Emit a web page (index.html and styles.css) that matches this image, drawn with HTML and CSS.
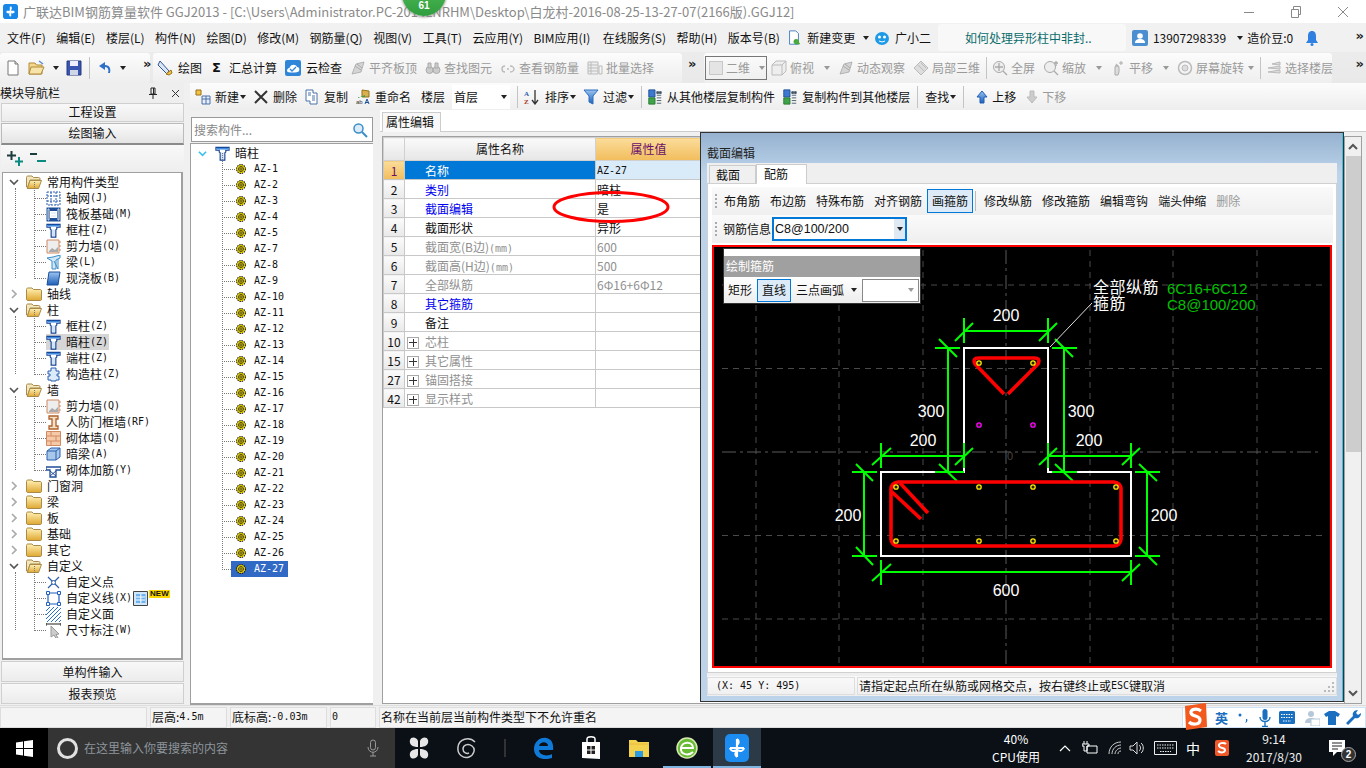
FILE: index.html
```html
<!DOCTYPE html>
<html lang="zh-CN">
<head>
<meta charset="utf-8">
<title>广联达BIM钢筋算量软件 GGJ2013</title>
<link rel="stylesheet" href="styles.css">
</head>
<body>
<svg class="defs" width="0" height="0" aria-hidden="true">
  <defs>
    <linearGradient id="gBlue" x1="0" y1="0" x2="0" y2="1"><stop offset="0" stop-color="#9cc4f0"/><stop offset="1" stop-color="#1d5fb8"/></linearGradient>
    <linearGradient id="gFold" x1="0" y1="0" x2="0" y2="1"><stop offset="0" stop-color="#fff2b8"/><stop offset="1" stop-color="#e0a830"/></linearGradient>
    <symbol id="col" viewBox="0 0 16 16"><path d="M1 1.500h14v3H11.500v2l-1 .8V15h-5V7.300l-1-.8v-2H1z" fill="#fff" stroke="#123f8f" stroke-width="1.200"/><path d="M1.500 2h13v1.800h-13z" fill="#3f8be0"/><path d="M6.500 7h3v7h-3z" fill="#cfe2f8"/></symbol>
    <symbol id="gear" viewBox="0 0 10 10"><circle cx="5" cy="5" r="4.400" fill="#ffe800" stroke="#111" stroke-width="1.100" stroke-dasharray="1.400 .9"/><circle cx="5" cy="5" r="2.500" fill="#ffe800" stroke="#222" stroke-width=".8"/><path d="M5 2.500v5M2.500 5h5" stroke="#222" stroke-width=".7"/></symbol>
    <symbol id="fold" viewBox="0 0 16 14"><path d="M.5 2.500c0-1 .5-1.500 1.500-1.500h4l1.500 1.500h6.500c1 0 1.500.5 1.500 1.500v8c0 1-.5 1.500-1.500 1.500H2c-1 0-1.500-.5-1.500-1.500z" fill="url(#gFold)" stroke="#a98a4a"/></symbol>
    <symbol id="foldo" viewBox="0 0 16 14"><path d="M.5 2.500c0-1 .5-1.500 1.500-1.500h4l1.500 1.500h5c1 0 1.500.5 1.500 1.500v1H4L1.500 13H2L.5 12z" fill="#f3e7c0" stroke="#a98a4a"/><path d="M4 5.500h11.500L12.500 13.500H1.300z" fill="url(#gFold)" stroke="#a98a4a"/></symbol>
    <symbol id="chevd" viewBox="0 0 10 10"><path d="M1 3l4 4 4-4" fill="none" stroke="#555" stroke-width="1.700"/></symbol>
    <symbol id="chevr" viewBox="0 0 10 10"><path d="M3 1l4 4-4 4" fill="none" stroke="#aaa" stroke-width="1.700"/></symbol>
    <symbol id="page" viewBox="0 0 16 16"><path d="M3 1h7l3 3v11H3z" fill="#fff" stroke="#777"/><path d="M10 1v3h3" fill="#ddd" stroke="#777"/></symbol>
    <symbol id="gray" viewBox="0 0 16 16"><path d="M2 14l4-10 8-2-3 10z" fill="#d5d5d5" stroke="#b3b3b3"/><path d="M5 6l6 4M7 4l5 4" stroke="#aaa" fill="none"/></symbol>
    <symbol id="copy" viewBox="0 0 16 16"><path d="M2 1h7v3h4v11H6v-3H2z" fill="#fff" stroke="#4a70a8"/><path d="M4 4h3M4 6h3M8 7h3M8 9h3M8 11h3" stroke="#4a70a8"/></symbol>
    <symbol id="up" viewBox="0 0 12 14"><path d="M6 1l5 6H8v6H4V7H1z" fill="url(#gBlue)" stroke="#1d5fb8"/></symbol>
    <symbol id="down" viewBox="0 0 12 14"><path d="M6 13L1 7h3V1h4v6h3z" fill="#ccc" stroke="#bbb"/></symbol>
    <symbol id="cpy2" viewBox="0 0 16 18"><path d="M1 1h7v8H1z" fill="#3d79d0" stroke="#1f4f96"/><path d="M1 10h7v7H1z" fill="#3fa34a" stroke="#26762f"/><path d="M10 3h2v2h-2zM13 3h2v2h-2zM10 7h5M10 10h5M10 13h5M10 16h5" stroke="#456" fill="#456"/></symbol>
  </defs>
</svg>

<header class="titlebar">
  <svg class="ic appic" viewBox="0 0 16 16"><rect width="16" height="16" rx="3" fill="#1887e8"/><path d="M8 3v10M4 8h8M8 3a2 2 0 0 1 0 3M4 8a2 2 0 0 0 3 1M12 8a2 2 0 0 1-3 1M8 13a2 2 0 0 1 0-3" stroke="#fff" stroke-width="1.500" fill="none"/></svg>
  <span class="titletext">广联达BIM钢筋算量软件 GGJ2013 - [C:\Users\Administrator.PC-2014LNRHM\Desktop\白龙村-2016-08-25-13-27-07(2166版).GGJ12]</span>
  <div class="winbtns">
    <svg width="12" height="12" viewBox="0 0 12 12"><path d="M1 6.500h10" stroke="#888"/></svg>
    <svg width="12" height="12" viewBox="0 0 12 12"><path d="M1.500 3.500h7v8h-7zM3.500 3V.5h7v8H9" fill="none" stroke="#888"/></svg>
    <svg width="12" height="12" viewBox="0 0 12 12"><path d="M1 1l10 10M11 1L1 11" stroke="#888"/></svg>
  </div>
</header>
<div class="bubble">61</div>

<nav class="menubar">
  <span>文件(F)</span><span>编辑(E)</span><span>楼层(L)</span><span>构件(N)</span><span>绘图(D)</span><span>修改(M)</span><span>钢筋量(Q)</span><span>视图(V)</span><span>工具(T)</span><span>云应用(Y)</span><span class="bimi">BIM应用(I)</span><span>在线服务(S)</span><span>帮助(H)</span><span>版本号(B)</span>
  <span class="mi newchg">
    <svg class="ic" viewBox="0 0 16 18"><path d="M3 1h7l3 3v12H3z" fill="#fff" stroke="#3a7ac0"/><path d="M9 16l3-5 3 5z" fill="#4aa83f"/><circle cx="10.500" cy="13" r="3" fill="#4aa83f"/></svg>
    新建变更<i class="dd menu-dd"></i>
  </span>
  <span class="mi gxe">
    <svg class="ic" viewBox="0 0 16 16"><ellipse cx="8" cy="8.500" rx="7" ry="6.500" fill="#1e9be8"/><circle cx="5.500" cy="7" r="1.500" fill="#fff"/><circle cx="10.500" cy="7" r="1.500" fill="#fff"/><path d="M5 11q3 2 6 0" stroke="#fff" fill="none"/></svg>
    广小二
  </span>
  <span class="newsbox">如何处理异形柱中非封..</span>
  <span class="mi user">
    <svg class="ic" viewBox="0 0 16 16"><rect width="16" height="16" rx="2" fill="#4b8fd0"/><circle cx="8" cy="6" r="2.800" fill="#fff"/><path d="M3 13c0-3 2-4 5-4s5 1 5 4z" fill="#fff"/></svg>
    13907298339<i class="dd user-dd"></i>
  </span>
  <span class="bean">造价豆:0</span>
  <svg class="ic bell" viewBox="0 0 16 16"><path d="M8 1c3 0 4 2.500 4 5v4l2 3H2l2-3V6c0-2.500 1-5 4-5z" fill="#2f80e0"/><circle cx="8" cy="14.500" r="1.500" fill="#2f80e0"/></svg>
  <span class="more">»</span>
</nav>

<div class="toolbar1">
  <div class="seg seg-a">
    <svg class="ic" viewBox="0 0 16 16"><use href="#page"/></svg>
    <svg class="ic wide" viewBox="0 0 18 16"><path d="M1 3h6l1.500 2H14v9H1z" fill="#f4d98c" stroke="#b08a3a"/><path d="M3 7h13l-3 7H1z" fill="#f7e4a8" stroke="#b08a3a"/><path d="M11 1l4 3" stroke="#5c8fd8" stroke-width="1.500"/></svg>
    <i class="dd"></i>
    <svg class="ic" viewBox="0 0 16 16"><path d="M1 1h14v14H1z" fill="#3a55b0" stroke="#263a80"/><path d="M4 1h8v5H4z" fill="#eef"/><path d="M4 10h8v5H4z" fill="#cfd6e8"/></svg>
    <span class="vsep"></span>
    <svg class="ic" viewBox="0 0 16 16"><path d="M13 13c1-4 0-8-5-8V2L2 6l6 4V7c3 0 4 3 3 6z" fill="#2f70c8"/></svg>
    <i class="dd"></i>
    <span class="more">»</span>
  </div>
  <div class="seg seg-b">
    <span class="tb">
      <svg class="ic" viewBox="0 0 16 16"><path d="M3 1l9 10-2 3L1 5z" fill="#d8e6f6" stroke="#34558c"/><path d="M9 14l5-4 1 3-3 2z" fill="#f3c343" stroke="#987018"/></svg>绘图</span>
    <span class="tb sigma"><b>Σ</b>汇总计算</span>
    <span class="tb"><svg class="ic" viewBox="0 0 16 16"><rect width="16" height="16" rx="2" fill="#2f86d8"/><path d="M2 11c0-3 3-3 3-4 1-3 6-3 7 0 2 0 3 2 2 4-1 2-12 2-12 0z" fill="#fff"/><path d="M5 9l2 2 4-4" stroke="#2f86d8" stroke-width="1.300" fill="none"/></svg>云检查</span>
    <span class="tb off"><svg class="ic" viewBox="0 0 16 16"><use href="#gray"/></svg>平齐板顶</span>
    <span class="tb off"><svg class="ic" viewBox="0 0 16 16"><circle cx="4.500" cy="10" r="3.500" fill="#ccc" stroke="#aaa"/><circle cx="11.500" cy="10" r="3.500" fill="#ccc" stroke="#aaa"/><path d="M3 3h3v5H3zM10 3h3v5h-3z" fill="#ccc" stroke="#aaa"/></svg>查找图元</span>
    <span class="tb off"><svg class="ic" viewBox="0 0 16 16"><path d="M2 9c0-2 1-3 3-3M5 12c-2 0-3-1-3-3M10 6c3 0 4 2 4 3s-1 3-4 3" stroke="#bbb" fill="none" stroke-width="1.400"/><circle cx="8" cy="9" r="1" fill="#bbb"/></svg>查看钢筋量</span>
    <span class="tb off"><svg class="ic" viewBox="0 0 16 16"><path d="M1 2h10v12H1z" fill="#eee" stroke="#bbb"/><path d="M1 5h10M1 8h10M1 11h10M4 2v12M12 6h3v8h-3z" stroke="#bbb" fill="none"/></svg>批量选择</span>
  </div>
  <span class="more gapr">»</span>
  <div class="seg seg-c">
    <span class="combo2d"><span class="sq"></span>二维<i class="dd offdd"></i></span>
    <span class="tb off"><svg class="ic" viewBox="0 0 16 16"><path d="M1 5l4-4h10v10l-4 4H1z" fill="#eee" stroke="#bbb"/><path d="M1 5h10v10M11 5l4-4" stroke="#bbb" fill="none"/></svg>俯视<i class="dd offdd"></i></span>
    <span class="tb off"><svg class="ic" viewBox="0 0 16 16"><use href="#gray"/></svg>动态观察</span>
    <span class="tb off"><svg class="ic" viewBox="0 0 16 16"><path d="M8 1l7 7-7 7-7-7z" fill="#ddd" stroke="#bbb"/><path d="M5 5l6 6M8 3l5 5" stroke="#bbb"/></svg>局部三维</span>
    <span class="vsep"></span>
    <span class="tb off"><svg class="ic" viewBox="0 0 16 16"><circle cx="7" cy="7" r="5.500" fill="#eee" stroke="#aaa"/><path d="M7 3v8M3 7h8M11 11l4 4" stroke="#aaa" stroke-width="1.300"/></svg>全屏</span>
    <span class="tb off"><svg class="ic" viewBox="0 0 16 16"><circle cx="7" cy="7" r="5.500" fill="#eee" stroke="#aaa"/><path d="M11 11l4 4M13 1v5M11 3h4" stroke="#aaa" stroke-width="1.300"/></svg>缩放<i class="dd offdd"></i></span>
    <span class="tb off"><svg class="ic" viewBox="0 0 16 16"><path d="M5 15V7c0-1 1-1 1 0V5c0-1 1-1 1 0v1c0-1 1-1 1 0v1c0-1 1-1 1 0v5l-1 3z" fill="#ddd" stroke="#aaa"/><path d="M11 1v4M9 3h4" stroke="#aaa"/></svg>平移<i class="dd offdd"></i></span>
    <span class="tb off tight"><svg class="ic" viewBox="0 0 16 16"><circle cx="8" cy="8" r="6.500" fill="none" stroke="#bbb" stroke-width="1.500"/><circle cx="8" cy="8" r="3" fill="#ddd" stroke="#bbb"/></svg>屏幕旋转<i class="dd offdd"></i></span>
    <span class="vsep"></span>
    <span class="tb off"><svg class="ic" viewBox="0 0 16 16"><path d="M6 4l8-2v3zM2 8l12-2v3zM2 12l12-2v3z" fill="#ddd" stroke="#bbb"/></svg>选择楼层</span>
  </div>
  <span class="more endmore">»</span>
</div>

<main class="workspace">
  <aside class="leftnav">
    <div class="navhead"><span class="navtitle">模块导航栏</span>
      <svg class="pin" width="10" height="12" viewBox="0 0 10 12"><path d="M3 1h4v6H3zM1 7.500h8M5 8v4M5.500 1v6" fill="none" stroke="#222"/></svg>
      <svg class="navx" width="9" height="9" viewBox="0 0 9 9"><path d="M1 1l7 7M8 1L1 8" stroke="#333"/></svg>
    </div>
    <button class="navbtn top">工程设置</button>
    <button class="navbtn act">绘图输入</button>
    <div class="navtools">
      <svg width="16" height="15" viewBox="0 0 16 15"><path d="M4.500 0v9M0 4.500h9" stroke="#1c3d3d" stroke-width="2"/><path d="M12 6v9M8 10.500h8" stroke="#0a8a80" stroke-width="2"/></svg>
      <svg width="16" height="15" viewBox="0 0 16 15"><path d="M0 3h7" stroke="#1c3d3d" stroke-width="2"/><path d="M7 10h9" stroke="#0a8a80" stroke-width="2"/></svg>
    </div>
    <div class="navtree">
      <div class="grp open">
        <div class="r0"><svg class="cv"><use href="#chevd"/></svg><svg class="fd"><use href="#foldo"/></svg>常用构件类型</div>
        <div class="r1"><svg class="ci" viewBox="0 0 15 15"><path d="M1 1h13v13H1zM1 5h13M1 10h13M5 1v13M10 1v13" fill="none" stroke="#2a5fb0" stroke-dasharray="2 1"/></svg>轴网<span class="m">(J)</span></div>
        <div class="r1"><svg class="ci" viewBox="0 0 15 15"><path d="M.5.5h14v14H.5z" fill="#1f4f96"/><path d="M4 4h7v7H4z" fill="#fff"/><path d="M2 2h1v11H2zM12 2h1v11h-1zM5 6h5M5 9h5" stroke="#cfe2f8"/></svg>筏板基础<span class="m">(M)</span></div>
        <div class="r1"><svg class="ci" viewBox="0 0 16 16"><use href="#col"/></svg>框柱<span class="m">(Z)</span></div>
        <div class="r1"><svg class="ci" viewBox="0 0 15 15"><path d="M1 1h12v13H1z" fill="#eee" stroke="#d08a60"/><path d="M3 12l3-3 3 2 3-3v5H3z" fill="#aaa"/><path d="M13 3h2M13 7h2M13 11h2" stroke="#d08a60"/></svg>剪力墙<span class="m">(Q)</span></div>
        <div class="r1"><svg class="ci" viewBox="0 0 15 15"><path d="M1 3l6-1 7-2v3l-4 2v9H6V6z" fill="#cfe7f6" stroke="#3a8ec8"/><path d="M8 6l4 8V4" stroke="#3a8ec8" fill="none"/></svg>梁<span class="m">(L)</span></div>
        <div class="r1"><svg class="ci" viewBox="0 0 15 15"><path d="M3 1h11l-2 13H1z" fill="url(#gBlue)" stroke="#1a4f9c"/></svg>现浇板<span class="m">(B)</span></div>
      </div>
      <div class="r0"><svg class="cv"><use href="#chevr"/></svg><svg class="fd"><use href="#fold"/></svg>轴线</div>
      <div class="grp open">
        <div class="r0"><svg class="cv"><use href="#chevd"/></svg><svg class="fd"><use href="#foldo"/></svg>柱</div>
        <div class="r1"><svg class="ci" viewBox="0 0 16 16"><use href="#col"/></svg>框柱<span class="m">(Z)</span></div>
        <div class="r1"><span class="selnode"><svg class="ci" viewBox="0 0 16 16"><use href="#col"/></svg>暗柱<span class="m">(Z)</span></span></div>
        <div class="r1"><svg class="ci" viewBox="0 0 16 16"><use href="#col"/></svg>端柱<span class="m">(Z)</span></div>
        <div class="r1"><svg class="ci" viewBox="0 0 15 15"><path d="M5 1h5v3h3v3h-2v2h2v4h-3v1H5v-1H2V9h2V7H2V4h3z" fill="#dcebfa" stroke="#2a5fb0"/></svg>构造柱<span class="m">(Z)</span></div>
      </div>
      <div class="grp open">
        <div class="r0"><svg class="cv"><use href="#chevd"/></svg><svg class="fd"><use href="#foldo"/></svg>墙</div>
        <div class="r1"><svg class="ci" viewBox="0 0 15 15"><path d="M1 1h12v13H1z" fill="#eee" stroke="#d08a60"/><path d="M3 12l3-3 3 2 3-3v5H3z" fill="#aaa"/><path d="M13 3h2M13 7h2M13 11h2" stroke="#d08a60"/></svg>剪力墙<span class="m">(Q)</span></div>
        <div class="r1"><svg class="ci" viewBox="0 0 15 15"><path d="M3 1h9v3h-2v7h2v3H3v-3h3V4H3z" fill="#f3e0c8" stroke="#b0602a" stroke-width="1.300"/></svg>人防门框墙<span class="m">(RF)</span></div>
        <div class="r1"><svg class="ci" viewBox="0 0 15 15"><path d="M.5.5h14v14H.5z" fill="#f5c9a8" stroke="#d08a60"/><path d="M.5 5h14M.5 10h14M5 .5V5M10 5v5M5 10v5" stroke="#d08a60"/></svg>砌体墙<span class="m">(Q)</span></div>
        <div class="r1"><svg class="ci" viewBox="0 0 15 15"><path d="M1 4l4-3h9v9l-4 3H1z" fill="#a8c8ea" stroke="#2a5fb0"/><path d="M1 4h9v9M10 4l4-3" stroke="#2a5fb0" fill="none"/></svg>暗梁<span class="m">(A)</span></div>
        <div class="r1"><svg class="ci" viewBox="0 0 15 15"><path d="M0 4h15v3H10v7H4V7H0z" fill="#fff" stroke="#1f4f96" stroke-width="1.300"/><path d="M4 8l6 5M10 8l-6 5" stroke="#1f4f96"/></svg>砌体加筋<span class="m">(Y)</span></div>
      </div>
      <div class="r0"><svg class="cv"><use href="#chevr"/></svg><svg class="fd"><use href="#fold"/></svg>门窗洞</div>
      <div class="r0"><svg class="cv"><use href="#chevr"/></svg><svg class="fd"><use href="#fold"/></svg>梁</div>
      <div class="r0"><svg class="cv"><use href="#chevr"/></svg><svg class="fd"><use href="#fold"/></svg>板</div>
      <div class="r0"><svg class="cv"><use href="#chevr"/></svg><svg class="fd"><use href="#fold"/></svg>基础</div>
      <div class="r0"><svg class="cv"><use href="#chevr"/></svg><svg class="fd"><use href="#fold"/></svg>其它</div>
      <div class="grp open">
        <div class="r0"><svg class="cv"><use href="#chevd"/></svg><svg class="fd"><use href="#foldo"/></svg>自定义</div>
        <div class="r1"><svg class="ci" viewBox="0 0 15 15"><path d="M2 2l11 11M13 2L2 13" stroke="#2a5fb0" stroke-width="1.200"/><circle cx="7.500" cy="7.500" r="2" fill="#fff" stroke="#2a5fb0"/></svg>自定义点</div>
        <div class="r1"><svg class="ci" viewBox="0 0 15 15"><path d="M2 2h11v11H2z" fill="none" stroke="#1f5fc0" stroke-width="1.200"/><path d="M.5.5h3v3h-3zM11.500.5h3v3h-3zM.5 11.500h3v3h-3zM11.500 11.500h3v3h-3z" fill="#fff" stroke="#1f5fc0"/></svg>自定义线<span class="m">(X)</span>
          <svg class="grid-ic" viewBox="0 0 15 15"><path d="M.5.5h14v14H.5z" fill="#cfe6fb" stroke="#444"/><path d="M3 3h4v9H3zM8.500 3h4v9h-4z" fill="#6fb2ee"/><path d="M3 6h9M3 9h9" stroke="#fff"/></svg><span class="newtag">NEW</span></div>
        <div class="r1"><svg class="ci" viewBox="0 0 15 15"><path d="M0 4L4 0M0 8L8 0M0 12L12 0M1 15L15 1M5 15L15 5M9 15l6-6M13 15l2-2" stroke="#2a6fd0"/></svg>自定义面</div>
        <div class="r1"><svg class="ci" viewBox="0 0 15 15"><path d="M0 1h15M0 0v3M15 0v3" stroke="#222"/><path d="M5 3l8 8-3 .5 2 3.500-2 .5-2-3.500-3 2z" fill="#ccc" stroke="#999"/></svg>尺寸标注<span class="m">(W)</span></div>
      </div>
    </div>
    <button class="navbtn">单构件输入</button>
    <button class="navbtn">报表预览</button>
  </aside>

  <div class="rightarea">
    <div class="toolbar2">
      <span class="tb"><svg class="ic" viewBox="0 0 16 16"><path d="M1 1h5v5H1z" fill="#f3c343" stroke="#987018"/><path d="M7 7h8v8H7z" fill="#e8eefb" stroke="#4a70a8"/><path d="M7 10h8M11 7v8" stroke="#4a70a8"/></svg>新建<i class="dd"></i></span>
      <span class="tb"><svg class="ic" viewBox="0 0 16 16"><path d="M2 2l12 12M14 2L2 14" stroke="#333" stroke-width="2"/></svg>删除</span>
      <span class="tb"><svg class="ic" viewBox="0 0 16 16"><use href="#copy"/></svg>复制</span>
      <span class="tb"><svg class="ic" viewBox="0 0 16 16"><path d="M7 1l7 1v6H7z" fill="#d8b050" stroke="#987018"/><path d="M3 9l7-3v2H3z" fill="#3aa04a"/><text class="rn" x="1" y="15">ab</text><path d="M10 15l2-5 2 5M10.500 13.500h3" stroke="#1f4f96" fill="none"/></svg>重命名</span>
      <span class="floor">楼层</span>
      <span class="floorcombo">首层<i class="dd"></i></span>
      <span class="vsep"></span>
      <span class="tb"><svg class="ic sorti" viewBox="0 0 16 16"><text class="az1" x="0" y="7">A</text><text class="az2" x="0" y="15">Z</text><path d="M11 1v13M8 11l3 4 3-4" stroke="#333" fill="none" stroke-width="1.300"/></svg>排序<i class="dd"></i></span>
      <span class="tb"><svg class="ic" viewBox="0 0 16 16"><path d="M1 1h14l-5 6v8l-4-2V7z" fill="url(#gBlue)" stroke="#2a6fc0"/></svg>过滤<i class="dd"></i></span>
      <span class="vsep"></span>
      <span class="tb"><svg class="ic" viewBox="0 0 16 18"><use href="#cpy2"/></svg>从其他楼层复制构件</span>
      <span class="tb"><svg class="ic" viewBox="0 0 16 18"><use href="#cpy2"/></svg>复制构件到其他楼层</span>
      <span class="vsep"></span>
      <span class="tb find">查找<i class="dd"></i></span>
      <span class="vsep"></span>
      <span class="tb upmv"><svg class="ic mv" viewBox="0 0 12 14"><use href="#up"/></svg>上移</span>
      <span class="tb off dnmv"><svg class="ic mv" viewBox="0 0 12 14"><use href="#down"/></svg>下移</span>
    </div>
    <div class="panels">
      <section class="complist">
        <div class="searchbox"><span class="ph">搜索构件...</span>
          <svg width="16" height="16" viewBox="0 0 16 16"><circle cx="6.500" cy="6.500" r="4.500" fill="#dcebfa" stroke="#3a8ec8" stroke-width="1.500"/><path d="M10 10l5 5" stroke="#3a8ec8" stroke-width="2"/></svg>
        </div>
        <div class="comptree">
          <div class="ctop"><svg class="cvb" viewBox="0 0 10 10"><path d="M1 3l4 4 4-4" fill="none" stroke="#3ac0f0" stroke-width="1.800"/></svg><svg class="ci" viewBox="0 0 16 16"><use href="#col"/></svg>暗柱</div>
          <div class="cr"><svg class="gr"><use href="#gear"/></svg>AZ-1</div>
          <div class="cr"><svg class="gr"><use href="#gear"/></svg>AZ-2</div>
          <div class="cr"><svg class="gr"><use href="#gear"/></svg>AZ-3</div>
          <div class="cr"><svg class="gr"><use href="#gear"/></svg>AZ-4</div>
          <div class="cr"><svg class="gr"><use href="#gear"/></svg>AZ-5</div>
          <div class="cr"><svg class="gr"><use href="#gear"/></svg>AZ-7</div>
          <div class="cr"><svg class="gr"><use href="#gear"/></svg>AZ-8</div>
          <div class="cr"><svg class="gr"><use href="#gear"/></svg>AZ-9</div>
          <div class="cr"><svg class="gr"><use href="#gear"/></svg>AZ-10</div>
          <div class="cr"><svg class="gr"><use href="#gear"/></svg>AZ-11</div>
          <div class="cr"><svg class="gr"><use href="#gear"/></svg>AZ-12</div>
          <div class="cr"><svg class="gr"><use href="#gear"/></svg>AZ-13</div>
          <div class="cr"><svg class="gr"><use href="#gear"/></svg>AZ-14</div>
          <div class="cr"><svg class="gr"><use href="#gear"/></svg>AZ-15</div>
          <div class="cr"><svg class="gr"><use href="#gear"/></svg>AZ-16</div>
          <div class="cr"><svg class="gr"><use href="#gear"/></svg>AZ-17</div>
          <div class="cr"><svg class="gr"><use href="#gear"/></svg>AZ-18</div>
          <div class="cr"><svg class="gr"><use href="#gear"/></svg>AZ-19</div>
          <div class="cr"><svg class="gr"><use href="#gear"/></svg>AZ-20</div>
          <div class="cr"><svg class="gr"><use href="#gear"/></svg>AZ-21</div>
          <div class="cr"><svg class="gr"><use href="#gear"/></svg>AZ-22</div>
          <div class="cr"><svg class="gr"><use href="#gear"/></svg>AZ-23</div>
          <div class="cr"><svg class="gr"><use href="#gear"/></svg>AZ-24</div>
          <div class="cr"><svg class="gr"><use href="#gear"/></svg>AZ-25</div>
          <div class="cr"><svg class="gr"><use href="#gear"/></svg>AZ-26</div>
          <div class="cr cur"><span class="curnode"><svg class="gr"><use href="#gear"/></svg>AZ-27</span></div>
        </div>
      </section>
      <section class="propcol">
        <div class="tabstrip"><span class="ptab">属性编辑</span></div>
        <div class="propbox">
          <div class="tablewrap">
            <table class="ptable">
              <colgroup><col class="c1"><col class="c2"><col class="c3"></colgroup>
              <thead><tr><th></th><th>属性名称</th><th class="valh">属性值</th></tr></thead>
              <tbody>
                <tr class="sel"><td class="n">1</td><td class="k">名称</td><td class="v mono">AZ-27</td></tr>
                <tr><td class="n">2</td><td class="k blue">类别</td><td class="v">暗柱</td></tr>
                <tr><td class="n">3</td><td class="k blue">截面编辑</td><td class="v">是</td></tr>
                <tr><td class="n">4</td><td class="k">截面形状</td><td class="v">异形</td></tr>
                <tr><td class="n">5</td><td class="k gray">截面宽(B边)<span class="m">(mm)</span></td><td class="v gray">600</td></tr>
                <tr><td class="n">6</td><td class="k gray">截面高(H边)<span class="m">(mm)</span></td><td class="v gray">500</td></tr>
                <tr><td class="n">7</td><td class="k gray">全部纵筋</td><td class="v gray">6Φ16+6Φ12</td></tr>
                <tr><td class="n">8</td><td class="k blue">其它箍筋</td><td class="v"></td></tr>
                <tr><td class="n">9</td><td class="k">备注</td><td class="v"></td></tr>
                <tr><td class="n">10</td><td class="k gray exp"><i class="plus"></i>芯柱</td><td class="v"></td></tr>
                <tr><td class="n">15</td><td class="k gray exp"><i class="plus"></i>其它属性</td><td class="v"></td></tr>
                <tr><td class="n">27</td><td class="k gray exp"><i class="plus"></i>锚固搭接</td><td class="v"></td></tr>
                <tr><td class="n">42</td><td class="k gray exp"><i class="plus"></i>显示样式</td><td class="v"></td></tr>
              </tbody>
            </table>
            <svg class="ellipse" width="122" height="36" viewBox="0 0 122 36"><ellipse cx="61" cy="18" rx="57" ry="14.500" fill="none" stroke="#f00" stroke-width="3"/></svg>
          </div>
          <div class="vscroll">
            <svg class="sarrow" width="12" height="12" viewBox="0 0 12 12"><path d="M2 8l4-4 4 4" fill="none" stroke="#555" stroke-width="2"/></svg>
            <div class="sthumb"></div>
            <svg class="sarrow bottom" width="12" height="12" viewBox="0 0 12 12"><path d="M2 4l4 4 4-4" fill="none" stroke="#555" stroke-width="2"/></svg>
          </div>
        </div>
      </section>
    </div>
  </div>
</main>

<footer class="statusbar">
  <span class="st s0"></span>
  <span class="st s1">层高:<span class="m">4.5m</span></span>
  <span class="st s2">底标高:<span class="m">-0.03m</span></span>
  <span class="st s3"><span class="m">0</span></span>
  <span class="st s4">名称在当前层当前构件类型下不允许重名</span>
</footer>

<div class="taskbar">
  <div class="start"><svg width="17" height="17" viewBox="0 0 17 17"><path d="M0 2.500l7-1v6.500H0zM8 1.300l9-1.300V8H8zM0 9h7v6.500l-7-1zM8 9h9v8l-9-1.300z" fill="#fff"/></svg></div>
  <div class="tsearch">
    <span class="cortana"></span>
    <span class="tsearchtxt">在这里输入你要搜索的内容</span>
    <svg class="mic" width="12" height="18" viewBox="0 0 12 18"><rect x="3.500" y="1" width="5" height="10" rx="2.500" fill="none" stroke="#999"/><path d="M1 8c0 7 10 7 10 0M6 13v4M3 17h6" fill="none" stroke="#999"/></svg>
  </div>
  <div class="tslot"><svg width="20" height="22" viewBox="0 0 20 22"><path d="M9 10C3 10 0 7 1 3s7-3 8 1zM11 10c6 0 9-3 8-7s-7-3-8 1zM9 12c-6 0-9 3-8 7s7 3 8-1zM11 12c6 0 9 3 8 7s-7 3-8-1z" fill="#e6e6e6"/></svg></div>
  <div class="tslot"><svg width="20" height="22" viewBox="0 0 20 22"><path d="M18 5C12-1 2 2 1 10s6 12 11 10 7-8 3-11-9-1-9 3 4 5 6 4" fill="none" stroke="#ccc" stroke-width="1.500"/></svg></div>
  <div class="tdiv"></div>
  <div class="tslot"><svg width="21" height="22" viewBox="0 0 21 22"><path d="M20 13H6c0 5 8 7 13 4v4c-9 3-18 0-18-9C1 5 7 0 13 1c5 .5 8 5 7 12zM15 9c0-5-8-5-9 0z" fill="#0f7ad8"/></svg></div>
  <div class="tslot"><svg width="20" height="24" viewBox="0 0 20 24"><path d="M1 6h18v17l-18-1z" fill="#fff"/><path d="M6 6V3c0-3 8-3 8 0v3" fill="none" stroke="#fff" stroke-width="1.500"/><path d="M6 10h3.500v3.500H6zM10.500 10H14v3.500h-3.500zM6 14.500h3.500V18H6zM10.500 14.500H14V18h-3.500z" fill="#222"/></svg></div>
  <div class="tslot"><svg width="22" height="20" viewBox="0 0 22 20"><path d="M1 2h7l2 2h11v15H1z" fill="#f3d24f"/><path d="M1 6h20" stroke="#e9b93c"/><path d="M7 19v-6h8v6z" fill="#2c9be0"/></svg></div>
  <div class="tslot pinned"><svg width="22" height="22" viewBox="0 0 22 22"><circle cx="11" cy="11" r="10" fill="#67bc34" stroke="#d8e8b0" stroke-width="1.500"/><path d="M4 11h13c0-7-11-7-12 0s8 8 12 4" fill="none" stroke="#fff" stroke-width="2"/></svg></div>
  <div class="tactive"><svg width="24" height="28" viewBox="0 0 24 28"><rect width="24" height="28" rx="5" fill="#1c8cf0"/><path d="M12 5v18M5 14h14" stroke="#fff" stroke-width="2.200"/><path d="M12 5a3.500 3.500 0 0 1 0 6M5 14a3.500 3.500 0 0 0 6 2M19 14a3.500 3.500 0 0 1-6 2M12 23a3.500 3.500 0 0 1 0-6" fill="none" stroke="#fff" stroke-width="2"/></svg></div>
  <div class="tray">
    <div class="cpu"><span>40%</span><span>CPU使用</span></div>
    <div class="ts w24"><svg width="12" height="8" viewBox="0 0 12 8"><path d="M1 7l5-5 5 5" fill="none" stroke="#fff" stroke-width="1.200"/></svg></div>
    <div class="ts w25"><svg width="16" height="14" viewBox="0 0 16 14"><path d="M2 0v3M5 0v3M0 3h7v2H5v5H2V5H0zM5 5h10v7H5z" fill="none" stroke="#fff"/></svg></div>
    <div class="ts w25"><svg width="14" height="14" viewBox="0 0 14 14"><path d="M1 13C1 6 6 1 13 1M4 13c0-5 4-9 9-9M7 13c0-3 3-6 6-6M10 13c0-2 1-3 3-3" fill="none" stroke="#ccc"/></svg></div>
    <div class="ts w20"><svg width="16" height="14" viewBox="0 0 16 14"><path d="M1 5h3l4-4v12l-4-4H1zM10 4c2 1 2 5 0 6M12 2c3 2 3 8 0 10" fill="none" stroke="#ddd"/></svg></div>
    <div class="ts w36"><svg width="23" height="14" viewBox="0 0 23 14"><path d="M.5.5h22v13H.5z" fill="none" stroke="#eee"/><path d="M3 4h17M3 7h17M6 10.500h11" stroke="#eee" stroke-dasharray="1.500 1"/></svg></div>
    <div class="ts w20 zh">中</div>
    <div class="ts w38"><svg width="14" height="16" viewBox="0 0 14 16"><rect width="14" height="16" rx="2" fill="#f0582a"/><path d="M11 4C9 2 3 3 4 6c1 3 6 1 6 4s-5 3-7 1" fill="none" stroke="#fff" stroke-width="2"/></svg></div>
    <div class="clock"><span>9:14</span><span>2017/8/30</span></div>
    <div class="notif"><svg width="16" height="16" viewBox="0 0 16 16"><path d="M0 0h16v12H8l-4 4v-4H0z" fill="#fff"/><path d="M3 3h10M3 6h10M3 9h6" stroke="#222"/></svg><span class="nbadge">2</span></div>
  </div>
</div>

<div class="imebar">
  <span class="imelogo"><svg width="24" height="28" viewBox="0 0 24 28"><path d="M2 3l21-3 1 24-21 3z" fill="#f2591f"/><path d="M18 8C14 5 7 6 8 10c1 4 9 2 9 7s-8 5-11 2" fill="none" stroke="#fff" stroke-width="3.200"/></svg></span>
  <span class="imeyin">英</span>
  <svg class="ime-punct" width="12" height="14" viewBox="0 0 12 14"><circle cx="2" cy="4" r="1.500" fill="#1a6fc0"/><path d="M9 8c1 1 0 4-2 4 1-1 1-2 1-4z" fill="#1a6fc0"/></svg>
  <svg width="12" height="18" viewBox="0 0 12 18"><rect x="3.500" y="0" width="5" height="11" rx="2.500" fill="#1a6fc0"/><path d="M1 8c0 6 10 6 10 0M6 13v4M3 17.500h6" fill="none" stroke="#1a6fc0" stroke-width="1.400"/></svg>
  <svg class="ime-kb" width="16" height="13" viewBox="0 0 16 13"><rect width="16" height="13" rx="1.500" fill="#1a6fc0"/><path d="M2 3.500h12M2 6.500h12M4 10h8" stroke="#fff" stroke-dasharray="1.500 1"/></svg>
  <svg width="16" height="16" viewBox="0 0 16 16"><circle cx="7" cy="4" r="3" fill="#b5c7d8"/><path d="M1 13c0-4 3-5 6-5s6 1 6 5z" fill="#b5c7d8"/><rect x="7" y="9" width="9" height="7" fill="#fff" stroke="#b5c7d8"/></svg>
  <svg class="ime-shirt" width="16" height="14" viewBox="0 0 16 14"><path d="M5 0h6l5 3-2 3-2-1v9H4V5L2 6 0 3z" fill="#1a6fc0"/></svg>
  <svg class="ime-wrench" width="15" height="15" viewBox="0 0 15 15"><path d="M0 13l7-7C6 3 8 0 12 0l-2 3 2 2 3-2c0 4-3 6-6 5l-7 7z" fill="#1a6fc0"/></svg>
</div>

<div class="dlg">
  <div class="dlgtitle">截面编辑</div>
  <div class="dlgbody">
    <div class="dlgtabs"><span class="dtab">截面</span><span class="dtab on">配筋</span></div>
    <div class="dlgpanel">
      <div class="dbar">
        <i class="grip"></i>
        <span>布角筋</span><span>布边筋</span><span>特殊布筋</span><span>对齐钢筋</span><span class="btnon">画箍筋</span><i class="dsep"></i><span>修改纵筋</span><span>修改箍筋</span><span>编辑弯钩</span><span>端头伸缩</span><span class="dis">删除</span>
      </div>
      <div class="dbar two">
        <i class="grip"></i>
        <span>钢筋信息</span>
        <span class="rebar"><span class="rebartxt">C8@100/200</span><span class="rebararrow"><i class="dd"></i></span></span>
      </div>
      <div class="cad">
        <svg class="cadsvg" width="616" height="419" viewBox="714 247 616 419">
          <g class="grid" fill="none">
            <path d="M722 285H1322M722 368.500H1322M722 535.500H1322M722 619H1322M756 250V665M839 250V665M923 250V665M1090 250V665M1173 250V665M1257 250V665"/>
            <path class="axis" d="M722 452H1322M1006 250V665"/>
          </g>
          <path class="wall" d="M964 472V348H1048V472H1131V556H881V472z"/>
          <g class="dim">
            <path d="M964 331H1048M964 318V343M1048 318V343M955 341L973 323M1039 341L1057 323"/>
            <path d="M948 348V472M935 348H960M939 339L957 357M935 472H964M939 464L957 481"/>
            <path d="M1064 348V472M1052 348H1077M1055 339L1073 357M1052 472H1077M1055 464L1073 481"/>
            <path d="M881 456H964M881 443V468M964 443V468M872 465L891 448M955 465L973 448"/>
            <path d="M1048 456H1131M1048 443V468M1131 443V468M1039 465L1057 448M1122 465L1140 448"/>
            <path d="M864 472V556M852 472H877M852 556H877M856 464L873 481M856 547L873 565"/>
            <path d="M1147 472V556M1135 472H1160M1135 556H1160M1139 464L1157 481M1139 547L1157 565"/>
            <path d="M881 572H1131M881 560V585M1131 560V585M872 581L891 564M1122 581L1140 564"/>
          </g>
          <path class="leader" d="M1050 347L1092 303"/>
          <g class="rebar-line">
            <rect x="891" y="482" width="230" height="64" rx="7"/>
            <path d="M892 492L921 519M900 483L928 513"/>
            <path d="M1004 394L975 364Q972 358 979 358H1034Q1041 358 1038 364L1008 394"/>
          </g>
          <g class="dots">
            <circle cx="979" cy="363" r="2.200"/><circle cx="1033" cy="363" r="2.200"/>
            <circle cx="896" cy="487" r="2.200"/><circle cx="979" cy="487" r="2.200"/><circle cx="1033" cy="487" r="2.200"/><circle cx="1116" cy="487" r="2.200"/>
            <circle cx="896" cy="541" r="2.200"/><circle cx="979" cy="541" r="2.200"/><circle cx="1033" cy="541" r="2.200"/><circle cx="1116" cy="541" r="2.200"/>
          </g>
          <g class="dots mag"><circle cx="979" cy="425" r="2.200"/><circle cx="1033" cy="425" r="2.200"/></g>
          <g class="dimt">
            <text x="1006" y="321">200</text>
            <text x="931" y="417">300</text>
            <text x="1081" y="417">300</text>
            <text x="923" y="446">200</text>
            <text x="1089" y="446">200</text>
            <text x="848" y="521">200</text>
            <text x="1164" y="521">200</text>
            <text x="1006" y="596">600</text>
          </g>
          <text class="zero" x="1007" y="460">0</text>
          <text class="lbl" x="1093" y="293">全部纵筋</text>
          <text class="lbl" x="1093" y="309">箍筋</text>
          <text class="grn" x="1167" y="294">6C16+6C12</text>
          <text class="grn" x="1167" y="310">C8@100/200</text>
        </svg>
        <div class="floatp">
          <div class="fpgap"></div>
          <div class="fphead">绘制箍筋</div>
          <div class="fprow"><span>矩形</span><span class="btnon">直线</span><span>三点画弧</span><i class="dd"></i><span class="fpcombo"><i class="dd offdd"></i></span></div>
        </div>
      </div>
    </div>
    <div class="dlgstatus">
      <span class="ds1 m">(X: 45 Y: 495)</span>
      <span class="ds2">请指定起点所在纵筋或网格交点，按右键终止或<span class="m">ESC</span>键取消</span>
      <svg class="sizegrip" width="12" height="12" viewBox="0 0 12 12"><path d="M9 1h2v2H9zM5 5h2v2H5zM9 5h2v2H9zM1 9h2v2H1zM5 9h2v2H5zM9 9h2v2H9z" fill="#bbb"/></svg>
    </div>
  </div>
</div>
</body>
</html>
```
FILE: styles.css
```css
* { box-sizing: border-box; }
html, body { margin: 0; padding: 0; }
body {
  width: 1366px; height: 768px; overflow: hidden; position: relative;
  display: flex; flex-direction: column;
  background: #f0f0f0; color: #111;
  font: 12px/16px "Noto Sans CJK SC", "Liberation Sans", sans-serif;
}
.defs { position: absolute; }
svg { display: block; flex: none; }
.m { font-family: "DejaVu Sans Mono", "Liberation Mono", monospace; font-size: 10px; line-height: 1; }
.ic { width: 16px; height: 16px; }
.ic.wide { width: 18px; }
.ic.mv { width: 12px; height: 14px; }
.dd { display: inline-block; flex: none; width: 0; height: 0; border: 3px solid transparent; border-top: 4px solid #222; border-bottom: 0; }
.offdd { border-top-color: #999; }
.vsep { width: 1px; height: 22px; background: #c4c4c4; flex: none; }
.more { font: 13px/14px "DejaVu Sans", sans-serif; font-weight: bold; color: #222; }

/* title */
.titlebar { height: 23px; background: #fff; display: flex; align-items: center; padding-left: 3px; flex: none; }
.appic { width: 15px; height: 15px; }
.titletext { margin-left: 5px; color: #8a8a8a; white-space: nowrap; font-size: 13px; }
.winbtns { margin-left: auto; display: flex; gap: 35px; padding-right: 17px; }
.bubble {
  position: absolute; left: 402px; top: -28px; width: 44px; height: 44px; border-radius: 50%;
  background: linear-gradient(#5cc35c, #2f9e3f); box-shadow: 0 1px 3px #888;
  color: #fff; font: bold 10px/12px "Liberation Sans", sans-serif; text-align: center; padding-top: 28px;
}

/* menu */
.menubar { height: 29px; background: #f1f1f1; display: flex; align-items: center; padding-left: 7px; gap: 10.500px; white-space: nowrap; flex: none; position: relative; }
.bimi { margin-right: 2px; }
.mi { display: flex; align-items: center; gap: 5px; }
.newchg { margin-left: -4px; }
.menu-dd { margin-left: 3px; }
.user-dd { margin-left: 6px; }
.gxe { margin-left: -6px; }
.newsbox { width: 188px; height: 27px; margin-left: -3.500px; background: #f8f8f8; border-radius: 3px; color: #0b6c6c; line-height: 27px; padding-left: 27px; }
.user { margin-left: -4.500px; }
.bean { margin-left: -6.500px; }
.menubar .more { position: absolute; right: 2px; top: 6px; }

/* toolbar 1 */
.toolbar1 { height: 31px; flex: none; display: flex; align-items: center; background: linear-gradient(#ececec, #e9e9e9); white-space: nowrap; }
.seg { height: 30px; display: flex; align-items: center; background: linear-gradient(#fcfcfc, #eeeeee); border-radius: 3px; flex: none; }
.seg-a { width: 150px; padding-left: 5px; gap: 7px; margin-right: 3px; }
.seg-a .more { margin-left: 10px; margin-top: -8px; }
.seg-b { width: 529px; padding-left: 4px; gap: 8px; }
.seg-c { gap: 8px; flex: 1; min-width: 0; margin-right: 24px; }
.gapr { width: 22px; flex: none; padding-left: 6px; margin-top: -8px; }
.endmore { margin-top: -8px; margin-right: 2px; flex: none; }
.tb { display: inline-flex; align-items: center; gap: 5px; flex: none; }
.tb .dd { margin-left: 7px; }
.tb.tight .dd { margin-left: 1px; }
.seg .off { gap: 3px; }
.off { color: #9a9a9a; }
.sigma b { font: bold 13px "DejaVu Sans", sans-serif; width: 10px; margin: 0 2px 0 2px; }
.combo2d { width: 62px; height: 24px; border: 1px solid #777; display: flex; align-items: center; gap: 3px; padding-left: 3px; margin: 0 -4px 0 1px; color: #9a9a9a; flex: none; }
.combo2d .sq { width: 14px; height: 14px; background: #e4e4e4; border: 1px solid #c8c8c8; }
.combo2d .dd { margin-left: 6px; }
.seg-c .vsep { margin: 0 -3px 0 -2px; }

/* workspace */
.workspace { flex: 1; display: flex; min-height: 0; }
.leftnav { width: 190px; flex: none; padding-right: 6px; display: flex; flex-direction: column; }
.navhead { height: 20px; display: flex; align-items: center; font-size: 12px; background: #eee; flex: none; }
.navtitle { flex: 1; }
.pin { margin-right: 13px; }
.navx { margin-right: 4px; }
.navbtn { margin: 0 0 1px 1px; width: 183px; height: 21px; font: inherit; color: #111; background: linear-gradient(#f8f8f8, #ececec); border: 1px solid #cfcfcf; padding: 0; flex: none; }
.navbtn.top { height: 19px; padding-bottom: 2px; }
.navbtn.act { height: 22px; background: linear-gradient(#fafafa, #e4e4e4); border-color: #bbb; border-bottom: 2px solid #8a8a8a; margin-bottom: 0; padding-bottom: 2px; }
.navtools { height: 27px; display: flex; align-items: center; gap: 7px; padding-left: 6px; background: linear-gradient(#f8f8f8, #eee); margin-left: 1px; flex: none; }
.navtree { flex: 1; margin: 0 0 1px 2px; width: 181px; background: #fff; border: 1px solid #a0a0a0; border-width: 1px 2px 2px 1px; padding-top: 1px; overflow: hidden; }
.r0, .r1 { height: 16px; display: flex; align-items: center; white-space: nowrap; position: relative; }
.cv { width: 10px; height: 10px; margin-left: 6px; }
.fd { width: 16px; height: 14px; margin: 0 5px 0 7px; }
.ci { width: 15px; height: 15px; flex: none; margin-right: 5px; }
.r1 { padding-left: 43px; }
.r1::before { content: ""; position: absolute; left: 31px; top: -8px; width: 11px; height: 16px; border-left: 1px dotted #777; border-bottom: 1px dotted #777; }
.grp { position: relative; }
.grp::before { content: ""; position: absolute; left: 12px; top: 14px; bottom: 8px; border-left: 1px dotted #777; }
.selnode { display: inline-flex; align-items: center; background: #d6d6d6; height: 16px; padding-right: 1px; }
.grid-ic { width: 15px; height: 15px; margin-left: 1px; }
.newtag { font: bold 8px/8px "Liberation Sans", sans-serif; background: #ffd800; color: #111; padding: 0 1px; margin: -8px 0 0 1px; }

.rightarea { flex: 1; min-width: 0; display: flex; flex-direction: column; }
.toolbar2 { height: 27px; flex: none; display: flex; align-items: center; gap: 7px; padding-left: 5px; white-space: nowrap; background: linear-gradient(#fcfcfc, #eeeeee); }
.toolbar2 .tb { gap: 4px; }
.toolbar2 .tb .dd { margin-left: -3px; }
.toolbar2 .vsep { margin-right: -2px; }
.sorti.sorti { width: 18px; }
.find { margin-left: 2px; }
.upmv { margin-left: 7px; }
.dnmv { margin-left: 3px; }
.floor { margin-left: 3px; }
.floorcombo { width: 58px; height: 24px; background: #fff; display: flex; align-items: center; justify-content: space-between; padding: 0 3px 0 2px; flex: none; }
.rn { font: 6px "Liberation Sans", sans-serif; fill: #333; }
.az1 { font: bold 7px "Liberation Serif", serif; fill: #2a5fb0; }
.az2 { font: bold 7px "Liberation Serif", serif; fill: #a03020; }

.panels { flex: 1; display: flex; min-height: 0; }
.complist { width: 183px; flex: none; display: flex; flex-direction: column; }
.searchbox { height: 25px; margin: 7px 0 0 1px; background: #fff; border: 1px solid #999; display: flex; align-items: center; justify-content: space-between; padding: 0 4px 0 2px; flex: none; }
.ph { color: #888; }
.comptree { flex: 1; margin-top: 1px; background: #fff; border: 1px solid #a0a0a0; border-width: 1px 0 2px 1px; padding-top: 1px; overflow: hidden; }
.ctop { height: 16px; display: flex; align-items: center; position: relative; }
.cvb { width: 9px; height: 9px; margin: 0 8px 0 7px; flex: none; }
.cr { height: 16px; display: flex; align-items: center; padding-left: 45px; position: relative; font: 10px/16px "DejaVu Sans Mono", monospace; }
.cr::before { content: ""; position: absolute; left: 31px; top: -8px; width: 12px; height: 16px; border-left: 1px dotted #777; border-bottom: 1px dotted #777; }
.gr { width: 10px; height: 10px; margin-right: 8px; }
.cur { padding-left: 40px; }
.cur::before { width: 8px; }
.curnode { display: flex; align-items: center; background: #316ac5; color: #fff; height: 16px; padding: 0 1px 0 5px; width: 57px; }

.propcol { flex: 1; min-width: 0; margin-left: 7px; display: flex; flex-direction: column; }
.tabstrip { height: 22px; background: #fff; border-bottom: 1px solid #ccc; flex: none; padding: 2px 0 0 2px; }
.ptab { display: block; width: 59px; height: 20px; background: #f8f8f8; border: 1px solid #ccc; border-bottom: 0; padding-left: 3px; line-height: 18px; }
.propbox { flex: 1; margin: 4px 4px 1px 2px; background: #fff; border: 1px solid #a0a0a0; display: flex; min-height: 0; }
.tablewrap { flex: 1; position: relative; min-width: 0; }
.ptable { border-collapse: collapse; table-layout: fixed; width: 318px; font-size: 12px; }
.c1 { width: 21px; } .c2 { width: 191px; } .c3 { width: 106px; }
.ptable th { height: 23px; padding: 0; font-weight: normal; background: linear-gradient(#fafafa, #e6e6e6); border: 1px solid #d0d0d0; }
.ptable th.valh { background: linear-gradient(#fbdc9a, #f2bd5c); color: #6a0f6a; }
.ptable td { height: 19px; padding: 0; border: 1px solid #c8c8c8; white-space: nowrap; overflow: hidden; line-height: 17px; }
.n { text-align: center; background: linear-gradient(#fbfbfb, #e9e9e9); }
.k { padding-left: 20px !important; }
.v { padding-left: 1px !important; }
.mono { font: 10px/17px "DejaVu Sans Mono", monospace; }
.blue { color: #0000f0; }
.gray { color: #909090; }
.sel .n { background: linear-gradient(#fbdc9a, #f2bd5c); color: #6a0f6a; }
.sel .k { background: #0078d7; color: #fff; }
.sel .v { background: #d9ebf9; }
.exp { padding-left: 2px !important; }
.plus { display: inline-block; width: 12px; height: 12px; border: 1px solid #aaa; vertical-align: -2px; margin-right: 6px; background: linear-gradient(#333,#333) center/8px 1px no-repeat, linear-gradient(#333,#333) center/1px 8px no-repeat, #fff; }
.ellipse { position: absolute; left: 167px; top: 52px; }
.vscroll { width: 17px; flex: none; background: #f0f0f0; border-left: 1px solid #a0a0a0; display: flex; flex-direction: column; align-items: center; padding: 4px 0; }
.sarrow { flex: none; }
.sarrow.bottom { margin-top: auto; }
.sthumb { width: 15px; height: 296px; background: #cdcdcd; margin-top: 3px; }

/* status */
.statusbar { height: 23px; flex: none; display: flex; gap: 3px; background: #f0f0f0; padding: 1px 0; border-top: 1px solid #ddd; }
.st { display: flex; align-items: center; height: 21px; border: 1px solid #ddd; padding: 0 0 1px 1px; background: #f4f4f4; white-space: nowrap; }
.s0 { width: 147px; }
.s1 { width: 77px; }
.s2 { width: 97px; }
.s3 { width: 46px; }
.s4 { flex: 1; }

/* taskbar */
.taskbar { height: 40px; flex: none; display: flex; background: #0a1016; color: #fff; }
.start { width: 48px; background: #000; display: flex; align-items: center; justify-content: center; }
.tsearch { width: 347px; background: #343434; display: flex; align-items: center; position: relative; padding-left: 9px; }
.cortana { width: 21px; height: 21px; border-radius: 50%; border: 3px solid #e0e0e0; flex: none; }
.tsearchtxt { margin-left: 6px; color: #8d959c; }
.mic { margin-left: auto; margin-right: 16px; }
.tslot { width: 48px; display: flex; align-items: center; justify-content: center; position: relative; }
.tdiv { width: 28px; position: relative; }
.tdiv::after { content: ""; position: absolute; left: 13px; top: 11px; height: 18px; width: 2px; background: #333; }
.pinned { box-shadow: inset 0 -2px #7fb4e0; }
.tactive { width: 48px; margin-left: 2px; background: #2b3a46; display: flex; align-items: center; justify-content: center; box-shadow: inset 0 -2px #7fb4e0; }
.tray { margin-left: auto; display: flex; align-items: center; height: 40px; }
.cpu, .clock { display: flex; flex-direction: column; align-items: center; line-height: 18px; }
.cpu { width: 62px; margin-right: 6px; }
.clock { width: 66px; color: #eee; }
.ts { display: flex; align-items: center; justify-content: center; }
.w24 { width: 24px; } .w25 { width: 25px; } .w20 { width: 20px; } .w36 { width: 36px; } .w38 { width: 38px; }
.zh { font-size: 14px; }
.notif { width: 59px; display: flex; align-items: center; justify-content: center; position: relative; }
.nbadge { position: absolute; left: 34px; top: 7px; width: 15px; height: 15px; border-radius: 50%; background: #333; border: 1px solid #aaa; font: bold 10px/13px "Liberation Sans", sans-serif; text-align: center; }

/* IME */
.imebar { position: absolute; left: 1182px; top: 707px; width: 184px; height: 21px; background: #fff; border: 1px solid #cfe3f4; display: flex; align-items: center; gap: 9px; padding-left: 32px; }
.imelogo { position: absolute; left: 0; top: -5px; }
.imeyin { font-weight: bold; font-size: 13px; color: #1a6fc0; }
.ime-punct { margin-left: 1px; }
.ime-kb { margin-left: -1px; }
.ime-shirt { margin-left: -5px; }
.ime-wrench { margin-left: -3px; }

/* dialog */
.dlg { position: absolute; left: 700px; top: 132px; width: 644px; height: 570px; border: 1px solid #333; background: linear-gradient(#96b2d0, #bcd3ea 40px, #bcd3ea); box-shadow: inset -1px 0 #2cc4e8; display: flex; flex-direction: column; }
.dlgtitle { height: 30px; padding: 13px 0 0 6px; line-height: 14px; flex: none; color: #222; }
.dlgbody { margin: 0 6px; flex: 1; display: flex; flex-direction: column; background: #efefef; padding-bottom: 5px; background-clip: content-box; }
.dlgtabs { height: 20px; flex: none; display: flex; align-items: flex-end; background: #efefef; padding-left: 2px; position: relative; }
.dtab { width: 47px; height: 18px; border: 1px solid #ccc; border-bottom: 0; padding-left: 6px; line-height: 17px; background: #f0f0f0; }
.dtab.on { width: 51px; height: 20px; background: #fff; line-height: 17px; padding-left: 7px; position: relative; top: 1px; }
.dlgpanel { flex: none; height: 490px; background: #fff; border: 1px solid #d0d0d0; padding: 3px 3px 0 4px; display: flex; flex-direction: column; }
.dbar { height: 28px; display: flex; align-items: center; gap: 10px; background: linear-gradient(#fafafa, #efefef); flex: none; white-space: nowrap; position: relative; padding-left: 12px; }
.dbar.two { gap: 1px; padding-left: 11px; }
.dis { color: #999; }
.grip { position: absolute; left: 3px; top: 7px; width: 2px; height: 14px; background: repeating-linear-gradient(#aaa 0 2px, transparent 2px 4px); }
.btnon { border: 1px solid #0078d7; background: #dcebf7; padding: 3px 4px; margin: 0 -6px 0 -5px; height: 24px; display: flex; align-items: center; }
.dsep { width: 1px; height: 20px; background: #bbb; margin: 0 -2px 0 -2px; }
.rebar { width: 135px; height: 24px; border: 2px solid #0078d7; background: #fff; display: flex; justify-content: space-between; align-items: center; padding-left: 1px; }
.rebartxt { font: 12.500px "Liberation Sans", sans-serif; }
.rebararrow { width: 11px; height: 20px; background: #dfe9f3; display: flex; align-items: center; justify-content: center; }
.cad { position: relative; width: 620px; height: 423px; border: 2px solid #f00; background: #000; margin-top: 2px; flex: none; }
.grid path { stroke: #4a4a4a; stroke-dasharray: 6 5; }
.grid .axis { stroke: #5a5a5a; stroke-dasharray: 14 4 3 4; }
.wall { fill: none; stroke: #fff; stroke-width: 2; }
.dim path { stroke: #00ff00; stroke-width: 2; fill: none; }
.leader { stroke: #ddd; fill: none; }
.rebar-line rect, .rebar-line path { fill: none; stroke: #f00; stroke-width: 3.600; }
.dots circle { fill: #221; stroke: #ffe800; stroke-width: 1.300; }
.dots.mag circle { stroke: #ff00ff; }
.dimt text { font: 16px "Liberation Sans", sans-serif; fill: #fff; text-anchor: middle; }
.zero { font: 11px "Liberation Sans", sans-serif; fill: #444; }
.lbl { font: 16px "Noto Sans CJK SC", sans-serif; fill: #fff; letter-spacing: .5px; }
.grn { font: 15px "Liberation Sans", sans-serif; fill: #00c000; }
.floatp { position: absolute; left: 9px; top: 1px; width: 198px; height: 56px; background: #fff; border: 1px solid #333; display: flex; flex-direction: column; }
.fpgap { height: 7px; flex: none; }
.fphead { height: 21px; background: #a0a0a0; color: #fff; line-height: 20px; padding-left: 2px; flex: none; }
.fprow { flex: 1; display: flex; align-items: center; gap: 5px; padding-left: 4px; background: linear-gradient(#fff, #ededed); white-space: nowrap; }
.fprow .btnon { margin: 0; padding: 0 4px; height: 23px; width: 34px; justify-content: center; }
.fprow > .dd { margin: 0 0 0 2px; }
.fpcombo { width: 57px; height: 23px; border: 1px solid #888; background: #fff; display: flex; align-items: center; justify-content: flex-end; padding-right: 4px; }
.dlgstatus { flex: 1; margin-top: 3px; display: flex; gap: 2px; background: linear-gradient(#fafafa, #efefef); position: relative; padding: 1px 0; }
.ds1 { width: 148px; border: 1px solid #ddd; display: flex; align-items: center; padding-left: 8px; }
.ds2 { flex: 1; border: 1px solid #ddd; display: flex; align-items: center; padding-left: 1px; white-space: nowrap; }
.sizegrip { position: absolute; right: 2px; bottom: 3px; }
```
